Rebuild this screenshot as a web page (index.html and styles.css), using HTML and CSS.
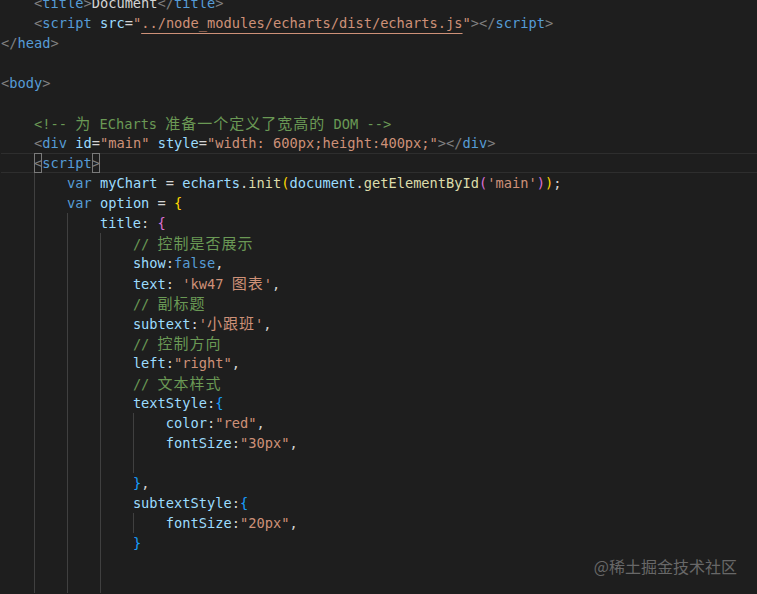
FILE: index.html
```html
<!DOCTYPE html>
<html>
<head>
<meta charset="utf-8">
<title>Editor</title>
<link rel="stylesheet" href="styles.css">
</head>
<body>
<div class="editor">
  <div class="code">
<div class="ln"><span class="i">    </span><span class="p">&lt;</span><span class="t">title</span><span class="p">&gt;</span>Document<span class="p">&lt;/</span><span class="t">title</span><span class="p">&gt;</span></div>
<div class="ln"><span class="i">    </span><span class="p">&lt;</span><span class="t">script</span> <span class="a">src</span>=<span class="s">"<span class="u">../node_modules/echarts/dist/echarts.js</span>"</span><span class="p">&gt;&lt;/</span><span class="t">script</span><span class="p">&gt;</span></div>
<div class="ln"><span class="p">&lt;/</span><span class="t">head</span><span class="p">&gt;</span></div>
<div class="ln"></div>
<div class="ln"><span class="p">&lt;</span><span class="t">body</span><span class="p">&gt;</span></div>
<div class="ln"></div>
<div class="ln"><span class="i">    </span><span class="c">&lt;!-- <span class="cjk">为</span> ECharts <span class="cjk">准备一个定义了宽高的</span> DOM --&gt;</span></div>
<div class="ln"><span class="i">    </span><span class="p">&lt;</span><span class="t">div</span> <span class="a">id</span>=<span class="s">"main"</span> <span class="a">style</span>=<span class="s">"width: 600px;height:400px;"</span><span class="p">&gt;&lt;/</span><span class="t">div</span><span class="p">&gt;</span></div>
<div class="ln cur"><span class="i">    </span><span class="p m">&lt;</span><span class="t">script</span><span class="p m">&gt;</span></div>
<div class="ln"><span class="i">    </span><span class="i g">    </span><span class="k">var</span> <span class="v">myChart</span> = <span class="v">echarts</span>.<span class="f">init</span><span class="y">(</span><span class="v">document</span>.<span class="f">getElementById</span><span class="o">(</span><span class="s">'main'</span><span class="o">)</span><span class="y">)</span>;</div>
<div class="ln"><span class="i">    </span><span class="i g">    </span><span class="k">var</span> <span class="v">option</span> = <span class="y">{</span></div>
<div class="ln"><span class="i">    </span><span class="i g">    </span><span class="i g">    </span><span class="v">title</span>: <span class="o">{</span></div>
<div class="ln"><span class="i">    </span><span class="i g">    </span><span class="i g">    </span><span class="i g">    </span><span class="c">// <span class="cjk">控制是否展示</span></span></div>
<div class="ln"><span class="i">    </span><span class="i g">    </span><span class="i g">    </span><span class="i g">    </span><span class="v">show</span>:<span class="k">false</span>,</div>
<div class="ln"><span class="i">    </span><span class="i g">    </span><span class="i g">    </span><span class="i g">    </span><span class="v">text</span>: <span class="s">'kw47 <span class="cjk">图表</span>'</span>,</div>
<div class="ln"><span class="i">    </span><span class="i g">    </span><span class="i g">    </span><span class="i g">    </span><span class="c">// <span class="cjk">副标题</span></span></div>
<div class="ln"><span class="i">    </span><span class="i g">    </span><span class="i g">    </span><span class="i g">    </span><span class="v">subtext</span>:<span class="s">'<span class="cjk">小跟班</span>'</span>,</div>
<div class="ln"><span class="i">    </span><span class="i g">    </span><span class="i g">    </span><span class="i g">    </span><span class="c">// <span class="cjk">控制方向</span></span></div>
<div class="ln"><span class="i">    </span><span class="i g">    </span><span class="i g">    </span><span class="i g">    </span><span class="v">left</span>:<span class="s">"right"</span>,</div>
<div class="ln"><span class="i">    </span><span class="i g">    </span><span class="i g">    </span><span class="i g">    </span><span class="c">// <span class="cjk">文本样式</span></span></div>
<div class="ln"><span class="i">    </span><span class="i g">    </span><span class="i g">    </span><span class="i g">    </span><span class="v">textStyle</span>:<span class="b">{</span></div>
<div class="ln"><span class="i">    </span><span class="i g">    </span><span class="i g">    </span><span class="i g">    </span><span class="i g">    </span><span class="v">color</span>:<span class="s">"red"</span>,</div>
<div class="ln"><span class="i">    </span><span class="i g">    </span><span class="i g">    </span><span class="i g">    </span><span class="i g">    </span><span class="v">fontSize</span>:<span class="s">"30px"</span>,</div>
<div class="ln"><span class="i">    </span><span class="i g">    </span><span class="i g">    </span><span class="i g">    </span><span class="i g">    </span></div>
<div class="ln"><span class="i">    </span><span class="i g">    </span><span class="i g">    </span><span class="i g">    </span><span class="b">}</span>,</div>
<div class="ln"><span class="i">    </span><span class="i g">    </span><span class="i g">    </span><span class="i g">    </span><span class="v">subtextStyle</span>:<span class="b">{</span></div>
<div class="ln"><span class="i">    </span><span class="i g">    </span><span class="i g">    </span><span class="i g">    </span><span class="i g">    </span><span class="v">fontSize</span>:<span class="s">"20px"</span>,</div>
<div class="ln"><span class="i">    </span><span class="i g">    </span><span class="i g">    </span><span class="i g">    </span><span class="b">}</span></div>
<div class="ln"><span class="i">    </span><span class="i g">    </span><span class="i g">    </span><span class="i g">    </span></div>
<div class="ln"><span class="i">    </span><span class="i g">    </span><span class="i g">    </span><span class="i g">    </span></div>
  </div>
  <div class="mark">@稀土掘金技术社区</div>
</div>
</body>
</html>
```
FILE: styles.css
```css
html, body {
  margin: 0;
  padding: 0;
  background: #1e1e1e;
}
.editor {
  position: relative;
  width: 757px;
  height: 594px;
  overflow: hidden;
  background: #1e1e1e;
}
.code {
  margin-top: -7px;
  padding-left: 1px;
  font-family: "DejaVu Sans Mono", monospace;
  font-size: 13.7px;
  color: #d4d4d4;
}
.ln {
  height: 20px;
  line-height: 20px;
  white-space: pre;
}
.cur {
  box-shadow: inset 0 1px 0 #2e2e2e, inset 0 -1px 0 #2e2e2e;
}
.i {
  display: inline-block;
  height: 20px;
  vertical-align: top;
  white-space: pre;
}
.g {
  box-shadow: inset 1px 0 0 #404040;
}
.p { color: #808080; }
.t { color: #569cd6; }
.a { color: #9cdcfe; }
.s { color: #ce9178; }
.u {
  text-decoration: underline;
  text-decoration-color: #ce9178;
  text-decoration-skip-ink: none;
  text-underline-offset: 5px;
}
.c { color: #6a9955; }
.k { color: #569cd6; }
.v { color: #9cdcfe; }
.f { color: #dcdcaa; }
.y { color: #ffd700; }
.o { color: #da70d6; }
.b { color: #179fff; }
.m {
  display: inline-block;
  height: 20px;
  vertical-align: top;
  box-shadow: inset 0 0 0 1px #7a7a7a;
}
.cjk {
  font-family: "Noto Sans CJK SC", sans-serif;
  font-size: 15px;
  letter-spacing: 1px;
}
.mark {
  position: absolute;
  right: 20px;
  top: 555px;
  font-family: "Noto Sans CJK SC", sans-serif;
  font-size: 16px;
  color: #686868;
  line-height: 22px;
}
```
